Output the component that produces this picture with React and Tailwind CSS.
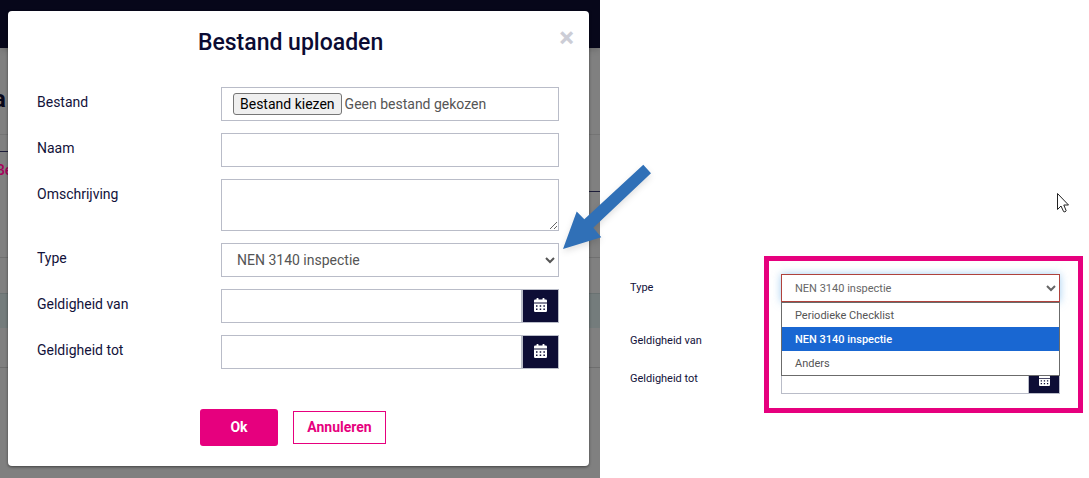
import React from 'react';

const typeOptions = ['Periodieke Checklist', 'NEN 3140 inspectie', 'Anders'];

const fieldClass = 'block w-full border border-[#b9bcc8] bg-white text-[#555]';

const CalendarIcon = ({ className }) => (
  <svg className={className} viewBox="0 0 13 14" fill="currentColor" aria-hidden="true">
    <path d="M2.5 0.6 a0.6 0.6 0 0 1 0.6 -0.6 h0.8 a0.6 0.6 0 0 1 0.6 0.6 V1.6 H8.5 V0.6 a0.6 0.6 0 0 1 0.6 -0.6 h0.8 a0.6 0.6 0 0 1 0.6 0.6 V1.6 H11.8 A1.2 1.2 0 0 1 13 2.8 V4.6 H0 V2.8 A1.2 1.2 0 0 1 1.2 1.6 H2.5 Z" />
    <path
      fillRule="evenodd"
      d="M0 5.4 H13 V12.8 A1.2 1.2 0 0 1 11.8 14 H1.2 A1.2 1.2 0 0 1 0 12.8 Z M2 7.2 v1.5 h1.5 v-1.5 Z M5.7 7.2 v1.5 h1.5 v-1.5 Z M9.4 7.2 v1.5 h1.5 v-1.5 Z M2 10.5 v1.5 h1.5 v-1.5 Z M5.7 10.5 v1.5 h1.5 v-1.5 Z M9.4 10.5 v1.5 h1.5 v-1.5 Z"
    />
  </svg>
);

const FormRow = ({ id, label, children }) => (
  <div className="grid grid-cols-[184px_1fr] items-start">
    <label htmlFor={id} className="pt-[5px] text-sm leading-5 text-[#12123a]">
      {label}
    </label>
    {children}
  </div>
);

const DateField = ({ id }) => (
  <div className="flex h-[34px]">
    <input id={id} type="text" className={`${fieldClass} min-w-0 flex-1 px-3 text-sm`} />
    <button
      type="button"
      aria-label="Kies datum"
      className="flex w-[37px] items-center justify-center border border-[#b9bcc8] bg-[#0d0d35] pb-0.5 text-white"
    >
      <CalendarIcon className="h-[14px] w-[13px]" />
    </button>
  </div>
);

// Page that stays visible behind the dialog
const DimmedPage = () => (
  <div className="col-start-1 row-start-1 overflow-hidden bg-[#808080]" aria-hidden="true">
    <div className="h-12 bg-[#07071a] shadow-md" />
    <div className="flex h-[87px] items-center justify-between border-b border-[#747474] pt-4">
      <span className="-ml-[7px] text-2xl font-bold text-[#07071a]">a</span>
    </div>
    <div className="flex h-[57px] justify-between">
      <div className="w-10">
        <div className="h-[17px] border-b border-[#1d1d3a]" />
        <span className="-ml-1 block pt-2 text-sm font-medium text-[#a8005c]">Be</span>
      </div>
      <div className="w-10 border-b border-[#1d1d3a]" />
    </div>
    <div className="h-[66px] border-b border-[#707070]" />
    <div className="h-9 border-b border-[#6a7272]" />
    <div className="h-[34px] bg-[#747c7c]" />
    <div className="h-10 border-b border-[#6e6e6e]" />
  </div>
);

const UploadDialog = () => (
  <div
    role="dialog"
    aria-labelledby="dialog-title"
    className="z-10 col-start-1 row-start-1 mt-[11px] mr-[11px] mb-3 ml-2 rounded bg-white pb-[19px] shadow-[0_1px_3px_rgba(0,0,0,0.5)]"
  >
    <div className="flex items-start pt-3 pr-[15px] pl-[14px]">
      <h1 id="dialog-title" className="flex-1 pt-1 text-center text-[23px] leading-8 font-medium text-[#0b0b33]">
        Bestand uploaden
      </h1>
      <button type="button" aria-label="Sluiten" className="text-[28px] leading-[30px] font-bold text-[#cccdd6]">
        ×
      </button>
    </div>

    <form className="pt-7 pr-[30px] pl-[29px]">
      <div className="flex flex-col gap-3">
        <FormRow id="bestand" label="Bestand">
          <label className={`${fieldClass} flex h-[34px] items-center gap-[3px] px-[11px] text-sm`}>
            <input id="bestand" type="file" className="sr-only" />
            <span className="rounded-[3px] border border-[#767676] bg-[#efefef] px-[6px] leading-5 text-black">
              Bestand kiezen
            </span>
            <span>Geen bestand gekozen</span>
          </label>
        </FormRow>
        <FormRow id="naam" label="Naam">
          <input id="naam" type="text" className={`${fieldClass} h-[34px] px-3 text-sm`} />
        </FormRow>
        <FormRow id="omschrijving" label="Omschrijving">
          <textarea id="omschrijving" className={`${fieldClass} h-[52px] resize-y px-3 py-1 text-sm`} />
        </FormRow>
        <FormRow id="type" label="Type">
          <select id="type" defaultValue="NEN 3140 inspectie" className={`${fieldClass} h-[34px] px-[11px] text-sm`}>
            {typeOptions.map((option) => (
              <option key={option}>{option}</option>
            ))}
          </select>
        </FormRow>
        <FormRow id="van" label="Geldigheid van">
          <DateField id="van" />
        </FormRow>
        <FormRow id="tot" label="Geldigheid tot">
          <DateField id="tot" />
        </FormRow>
      </div>

      <div className="flex items-center justify-center gap-[15px] pt-10 pr-[10px]">
        <button
          type="button"
          className="h-[37px] w-[78px] rounded-[3px] bg-[#e6007e] pb-0.5 text-sm font-bold text-white"
        >
          Ok
        </button>
        <button
          type="button"
          className="h-[33px] w-[93px] border border-[#e6007e] bg-white pb-0.5 text-sm font-bold text-[#e6007e]"
        >
          Annuleren
        </button>
      </div>
    </form>
  </div>
);

const PointerArrow = () => (
  <svg
    className="absolute top-[160px] -right-[56px] z-20 drop-shadow-md"
    width="96"
    height="96"
    viewBox="560 160 96 96"
    aria-hidden="true"
  >
    <path d="M563 249 L576.7 211.5 L584.3 219.3 L643.3 164.7 L651 173.3 L593.3 227.7 L601.3 237.3 Z" fill="#3070b7" />
  </svg>
);

const MouseCursor = () => (
  <svg
    className="absolute top-[192px] right-[19px]"
    width="14"
    height="22"
    viewBox="0 0 14 22"
    aria-hidden="true"
  >
    <path
      d="M1.5 1.5 V17.5 L5 14 L7.6 19.6 Q9 20.6 10.2 18.8 L7.8 13 H12.5 Z"
      fill="white"
      stroke="#222"
      strokeWidth="1"
    />
  </svg>
);

// Detail of the form with the type list opened
const TypeDetail = () => (
  <section className="relative flex items-start pt-64 pr-[6px] pl-[30px]">
    <MouseCursor />
    <div className="flex w-[134px] flex-none flex-col pt-6 text-[11px] leading-4 text-[#12123a]">
      <label htmlFor="detail-type" className="h-[53px]">
        Type
      </label>
      <label htmlFor="detail-van" className="h-[38px]">
        Geldigheid van
      </label>
      <label htmlFor="detail-tot">Geldigheid tot</label>
    </div>

    <div className="flex-1 border-5 border-[#e6007e] px-3 pt-[13px] pb-[14px]">
      <div className="mr-[6px]">
        <div className="relative">
          <select
            id="detail-type"
            defaultValue="NEN 3140 inspectie"
            className="block h-7 w-full border border-[#b0423c] bg-white px-[9px] text-[11px] text-[#666] shadow-[0_0_8px_rgba(102,175,233,0.6)]"
          >
            {typeOptions.map((option) => (
              <option key={option}>{option}</option>
            ))}
          </select>
          <ul className="absolute top-full right-0 left-0 z-10 border border-[#6b6b6b] bg-white text-[11px] leading-[22px] text-[#555]">
            <li className="px-[13px] pt-0.5">Periodieke Checklist</li>
            <li className="bg-[#1967d2] px-[13px] pt-0.5 font-medium text-white">NEN 3140 inspectie</li>
            <li className="px-[13px] pt-0.5">Anders</li>
          </ul>
        </div>
        <input id="detail-van" type="text" className="mt-[26px] block h-7 w-full border border-[#b9bcc8]" />
        <div className="mt-[10px] flex h-7">
          <input id="detail-tot" type="text" className="min-w-0 flex-1 border border-[#b9bcc8]" />
          <button
            type="button"
            aria-label="Kies datum"
            className="flex w-[31px] items-center justify-center border-r border-b border-[#b9bcc8] bg-[#0d0d35] text-white"
          >
            <CalendarIcon className="h-3 w-[11px]" />
          </button>
        </div>
      </div>
    </div>
  </section>
);

const App = () => {
  return (
    <main className="grid min-h-screen grid-cols-[600fr_489fr] bg-white font-['Roboto',sans-serif]">
      <section className="relative grid">
        <DimmedPage />
        <UploadDialog />
        <PointerArrow />
      </section>
      <TypeDetail />
    </main>
  );
};

export default App;
